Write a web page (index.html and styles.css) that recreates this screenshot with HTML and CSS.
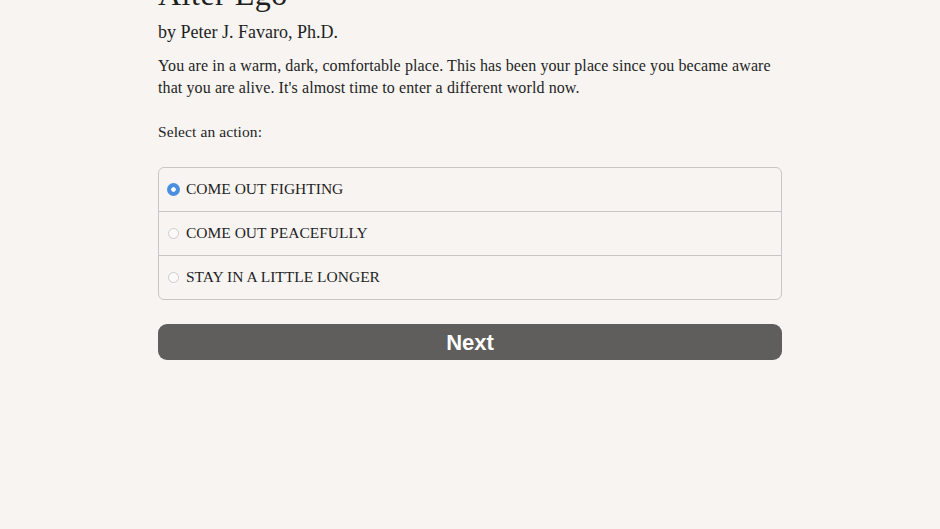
FILE: index.html
```html
<!DOCTYPE html>
<html>
<head>
<meta charset="utf-8">
<link rel="stylesheet" href="styles.css">
</head>
<body>
<main class="page">
  <h1 class="title">Alter Ego</h1>
  <p class="byline">by Peter J. Favaro, Ph.D.</p>
  <p class="intro">You are in a warm, dark, comfortable place. This has been your place since you became aware that you are alive. It's almost time to enter a different world now.</p>
  <p class="prompt">Select an action:</p>
  <div class="options">
    <label class="option"><span class="radio checked"></span><span class="option-text">COME OUT FIGHTING</span></label>
    <label class="option"><span class="radio"></span><span class="option-text">COME OUT PEACEFULLY</span></label>
    <label class="option"><span class="radio"></span><span class="option-text">STAY IN A LITTLE LONGER</span></label>
  </div>
  <button class="next">Next</button>
</main>
</body>
</html>
```
FILE: styles.css
```css
html, body {
  margin: 0;
  padding: 0;
  background: #f7f4f2;
}
body {
  font-family: "Liberation Serif", "DejaVu Serif", serif;
  color: #1f1f1f;
  height: 529px;
  overflow: hidden;
}
.page {
  width: 624px;
  margin: 0 0 0 158px;
  display: flex;
  flex-direction: column;
}
.title {
  font-weight: normal;
  font-size: 32px;
  line-height: 36px;
  letter-spacing: 0.5px;
  margin: -24px 0 0 0;
}
.byline {
  font-size: 18px;
  line-height: 24px;
  margin: 8px 0 0 0;
}
.intro {
  font-size: 16px;
  letter-spacing: 0.1px;
  line-height: 22px;
  margin: 11px 0 0 0;
}
.prompt {
  font-size: 15.5px;
  letter-spacing: 0.1px;
  line-height: 22px;
  margin: 22px 0 0 0;
}
.options {
  margin-top: 24px;
  border: 1px solid #c9c7c5;
  border-radius: 6px;
  display: flex;
  flex-direction: column;
}
.option {
  height: 43px;
  display: flex;
  align-items: center;
  padding-left: 9px;
  border-top: 1px solid #c9c7c5;
}
.option:first-child {
  border-top: none;
}
.radio {
  width: 11px;
  height: 11px;
  border-radius: 50%;
  border: 1px solid #cfcdcb;
  background: #fbfaf9;
  box-sizing: border-box;
  margin-right: 7px;
  flex: none;
}
.radio.checked {
  border: none;
  background: radial-gradient(circle, #ffffff 0 2px, #4a8fe0 2.5px);
  width: 13px;
  height: 13px;
  margin-left: -1px;
  margin-right: 6px;
}
.option-text {
  font-size: 15.5px;
  margin-top: -2px;
}
.next {
  margin-top: 24px;
  height: 36px;
  border: none;
  border-radius: 9px;
  background: #5f5e5c;
  color: #ffffff;
  font-family: "Liberation Sans", Arial, sans-serif;
  font-weight: bold;
  font-size: 22px;
  padding: 2px 0 0 0;
}
```
